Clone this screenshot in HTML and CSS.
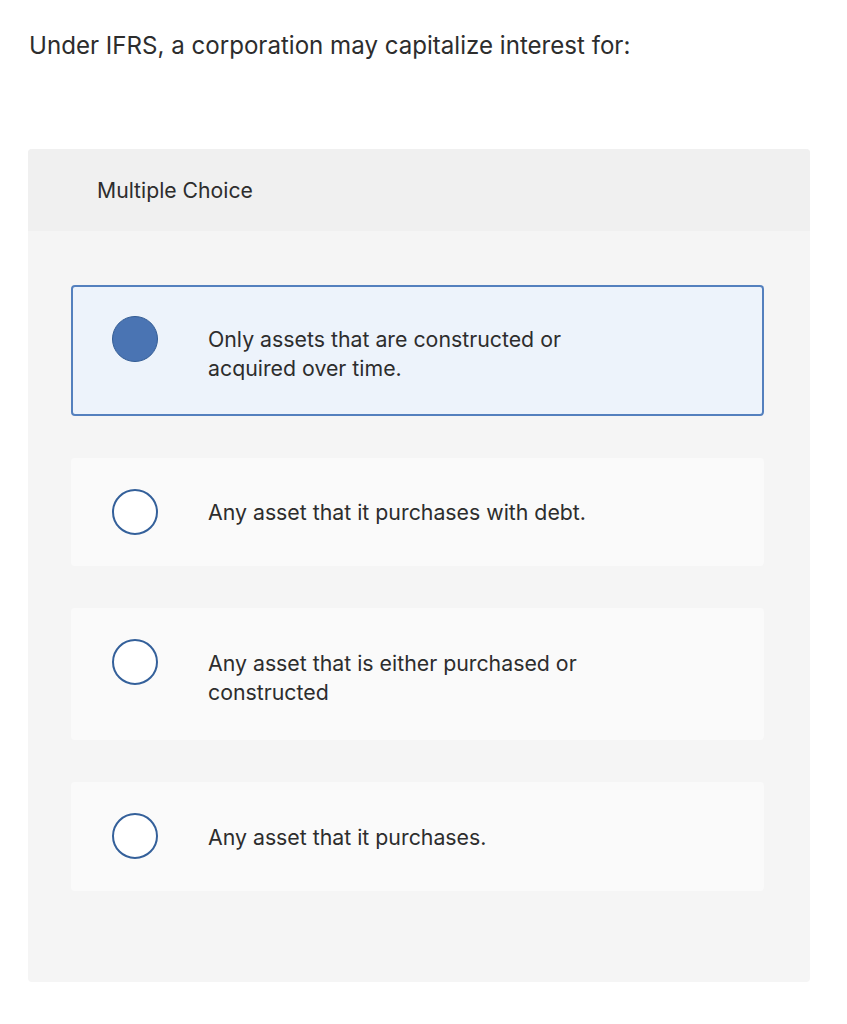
FILE: index.html
```html
<!DOCTYPE html>
<html>
<head>
<meta charset="utf-8">
<link rel="stylesheet" href="styles.css">
</head>
<body>
<div class="page">
  <h1 class="question">Under IFRS, a corporation may capitalize interest for:</h1>
  <div class="panel">
    <div class="panel-header">Multiple Choice</div>
    <div class="panel-body">
      <div class="option selected">
        <span class="radio"></span>
        <span class="label">Only assets that are constructed or<br>acquired over time.</span>
      </div>
      <div class="option">
        <span class="radio"></span>
        <span class="label">Any asset that it purchases with debt.</span>
      </div>
      <div class="option">
        <span class="radio"></span>
        <span class="label">Any asset that is either purchased or<br>constructed</span>
      </div>
      <div class="option">
        <span class="radio"></span>
        <span class="label">Any asset that it purchases.</span>
      </div>
    </div>
  </div>
</div>
</body>
</html>
```

FILE: styles.css
```css
html, body {
  margin: 0;
  padding: 0;
  background: #ffffff;
}
body {
  font-family: Inter, "Open Sans", sans-serif;
  color: #333333;
}
.page {
  padding: 29px 37px 0 28px;
}
.question {
  margin: 0 0 0 1px;
  font-size: 24.1px;
  font-weight: 400;
  line-height: 34px;
  color: #2d2d2d;
}
.panel {
  margin-top: 86px;
  background: #f5f5f5;
  border-radius: 4px;
  overflow: hidden;
}
.panel-header {
  background: #f0f0f0;
  height: 82px;
  line-height: 82px;
  padding-left: 69px;
  font-size: 21.2px;
  color: #2d2d2d;
}
.panel-body {
  padding: 54px 46px 91px 43px;
  display: flex;
  flex-direction: column;
  gap: 42px;
}
.option {
  background: #fafafa;
  border-radius: 4px;
  padding: 31px 20px 31.5px 41px;
  display: flex;
  align-items: flex-start;
}
.option.selected {
  background: #edf3fb;
  border: 2px solid #5480be;
  padding: 28.5px 18px 28.5px 39px;
}
.radio {
  flex: none;
  box-sizing: border-box;
  width: 46px;
  height: 46px;
  margin-right: 50px;
  border-radius: 50%;
  border: 2px solid #34609a;
  background: #ffffff;
}
.selected .radio {
  background: #4a74b3;
  border: 1.5px solid #335c94;
}
.label {
  margin: 9.5px 0 2px;
  font-size: 21.3px;
  line-height: 29px;
  color: #2d2d2d;
}
```
